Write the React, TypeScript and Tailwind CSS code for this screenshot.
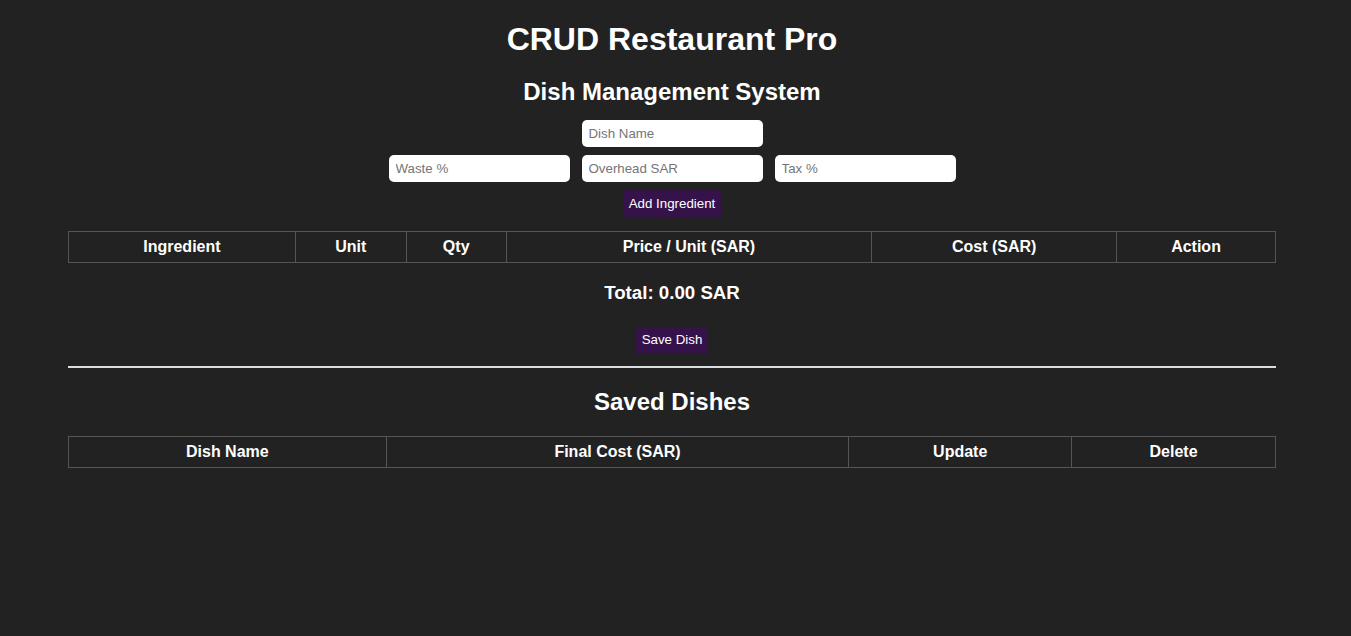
export default function App() {
  const ingredientCols = [
    { label: "Ingredient", w: "w-[227px]" },
    { label: "Unit", w: "w-[111px]" },
    { label: "Qty", w: "w-[100px]" },
    { label: "Price / Unit (SAR)", w: "w-[366px]" },
    { label: "Cost (SAR)", w: "w-[245px]" },
    { label: "Action", w: "w-[159px]" },
  ];
  const dishCols = [
    { label: "Dish Name", w: "w-[318px]" },
    { label: "Final Cost (SAR)", w: "w-[463px]" },
    { label: "Update", w: "w-[223px]" },
    { label: "Delete", w: "w-[204px]" },
  ];

  const inputCls =
    "w-[181px] h-[27px] rounded-[5px] bg-white px-[7px] text-[13.3px] text-black placeholder:text-[#757575] outline-none";

  return (
    <div className="min-h-[636px] bg-[#222222] text-white font-['Liberation_Sans',Arial,sans-serif]">
      <div className="w-[1344px]">
        <h1 className="pt-[21px] text-center text-[32px] font-bold leading-[37px]">CRUD Restaurant Pro</h1>
        <h2 className="mt-[20px] text-center text-[24px] font-bold leading-[28px]">Dish Management System</h2>

        <div className="mt-[14px] flex flex-col items-center gap-[8px]">
          <input className={inputCls} placeholder="Dish Name" />
          <div className="flex gap-[12px]">
            <input className={inputCls} placeholder="Waste %" />
            <input className={inputCls} placeholder="Overhead SAR" />
            <input className={inputCls} placeholder="Tax %" />
          </div>
          <button className="h-[27px] bg-[#35124a] px-[6px] text-[13.3px] text-white">Add Ingredient</button>
        </div>

        <table className="ml-[68px] mt-[14px] w-[1208px] border-collapse">
          <thead>
            <tr>
              {ingredientCols.map((c) => (
                <th key={c.label} className={`${c.w} h-[31px] border border-[#555555] text-[16px] font-bold`}>
                  {c.label}
                </th>
              ))}
            </tr>
          </thead>
        </table>

        <h3 className="mt-[19px] text-center text-[18.7px] font-bold leading-[22px]">Total: 0.00 SAR</h3>

        <div className="mt-[23px] flex justify-center">
          <button className="h-[26px] bg-[#35124a] px-[6px] text-[13.3px] text-white">Save Dish</button>
        </div>

        <hr className="ml-[68px] mt-[13px] w-[1208px] border-t-2 border-[#dddddd]" />

        <h2 className="mt-[20px] text-center text-[24px] font-bold leading-[28px]">Saved Dishes</h2>

        <table className="ml-[68px] mt-[20px] w-[1208px] border-collapse">
          <thead>
            <tr>
              {dishCols.map((c) => (
                <th key={c.label} className={`${c.w} h-[31px] border border-[#555555] text-[16px] font-bold`}>
                  {c.label}
                </th>
              ))}
            </tr>
          </thead>
        </table>
      </div>
    </div>
  );
}
